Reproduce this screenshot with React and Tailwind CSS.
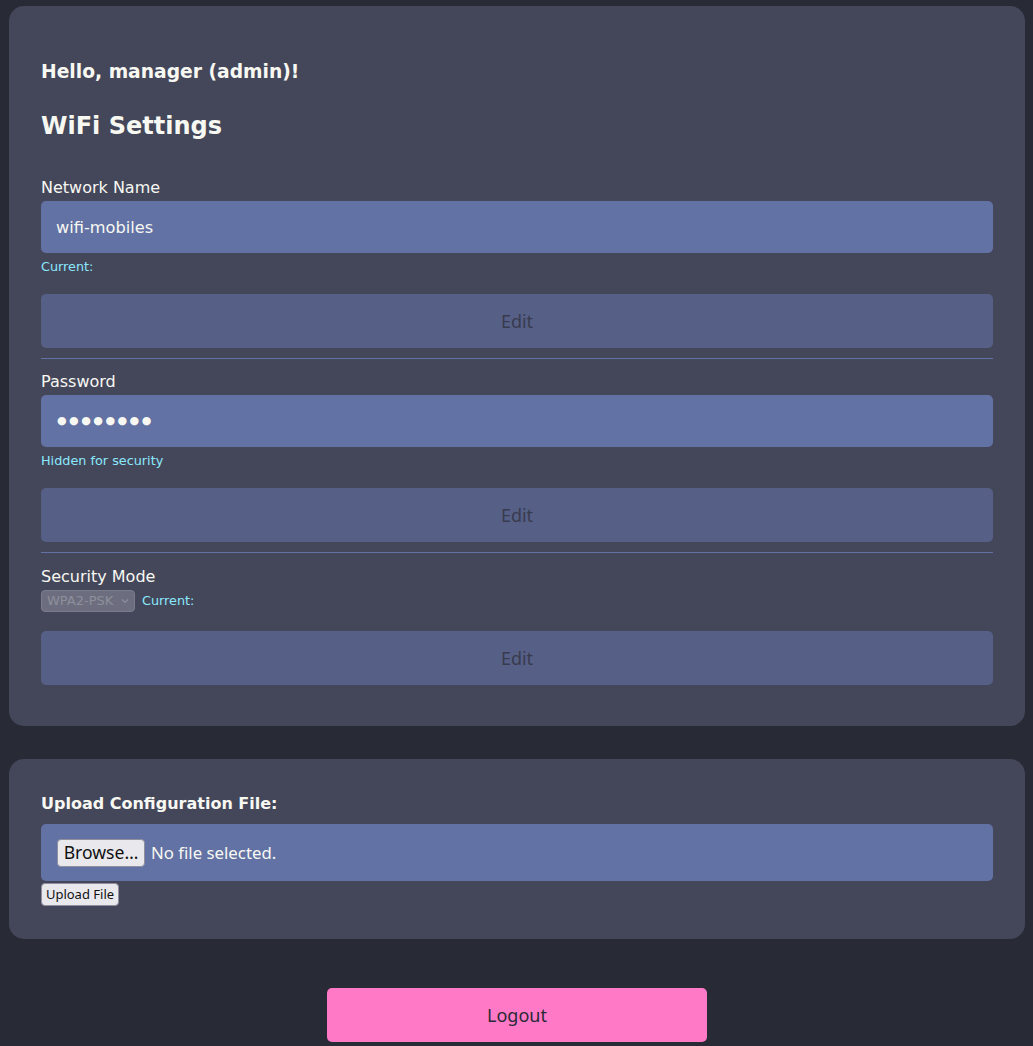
function Field({ label, value, note, password }) {
  return (
    <div>
      <div className="text-[16px] leading-[20px]">{label}</div>
      <div className="mt-[3px] h-[52px] rounded-[5px] bg-[#6272a4] px-[15px] flex items-center">
        {password ? (
          <span className="pl-[1px] text-[11px] tracking-[2.5px]">●●●●●●●●</span>
        ) : (
          <span className="pt-[3px] text-[16.2px]">{value}</span>
        )}
      </div>
      <div className="mt-[6px] text-[12.8px] leading-[16px] text-[#8be9fd]">{note}</div>
    </div>
  );
}

function EditButton({ className }) {
  return (
    <button
      disabled
      className={
        "w-full h-[54px] rounded-[5px] bg-[#566086] text-[#383b4f] text-[18px] font-['Noto_Sans',sans-serif] " +
        className
      }
    >
      Edit
    </button>
  );
}

export default function App() {
  return (
    <div className="min-h-screen bg-[#282a36] pt-[6px] pl-[9px] pr-[8px] pb-[4px] font-['DejaVu_Sans',sans-serif] text-[#f8f8f2]">
      <div className="rounded-[15px] bg-[#44475a] px-[32px] pt-[54px] pb-[41px]">
        <h3 className="text-[18.72px] leading-[24px] font-bold">Hello, manager (admin)!</h3>
        <h2 className="mt-[27px] text-[24px] leading-[30px] font-bold">WiFi Settings</h2>

        <div className="mt-[37px]">
          <Field label="Network Name" value="wifi-mobiles" note="Current:" />
        </div>
        <EditButton className="mt-[19px]" />
        <div className="mt-[10px] h-px bg-[#6272a4]" />

        <div className="mt-[13px]">
          <Field label="Password" note="Hidden for security" password />
        </div>
        <EditButton className="mt-[19px]" />
        <div className="mt-[10px] h-px bg-[#6272a4]" />

        <div className="mt-[14px] text-[16px] leading-[20px]">Security Mode</div>
        <div className="mt-[3px] flex items-center">
          <div className="w-[94px] h-[22px] rounded-[4px] border border-[#7a7c8c] bg-[#6c6e7f] pl-[5px] pr-[4px] flex items-center justify-between text-[13px] text-[#8e8f9c]">
            <span>WPA2-PSK</span>
            <svg width="10" height="10" viewBox="0 0 10 10" fill="none" stroke="#8e8f9c" strokeWidth="1.2">
              <path d="M2 3.5 L5 6.5 L8 3.5" />
            </svg>
          </div>
          <span className="ml-[7px] text-[12.8px] leading-[16px] text-[#8be9fd]">Current:</span>
        </div>
        <EditButton className="mt-[19px]" />
      </div>

      <div className="mt-[33px] rounded-[15px] bg-[#44475a] px-[32px] pt-[35px] pb-[33px]">
        <div className="text-[16px] leading-[20px] font-bold">Upload Configuration File:</div>
        <div className="mt-[10px] h-[57px] rounded-[5px] bg-[#6272a4] pl-[16px] flex items-center font-['Noto_Sans',sans-serif]">
          <span className="h-[28px] w-[88px] rounded-[4px] border border-[#8f8f9d] bg-[#e9e9ed] text-[#111] text-[17.6px] flex items-center justify-center">
            Browse…
          </span>
          <span className="ml-[6px] text-[16.8px]">No file selected.</span>
        </div>
        <button className="mt-[2px] h-[23px] w-[78px] rounded-[4px] border border-[#8f8f9d] bg-[#e9e9ed] text-[#111] text-[13px] font-['Noto_Sans',sans-serif]">
          Upload File
        </button>
      </div>

      <div className="mt-[49px] flex justify-center">
        <button className="w-[380px] h-[54px] rounded-[5px] bg-[#ff79c6] text-[#282a36] text-[18px] font-['Noto_Sans',sans-serif]">
          Logout
        </button>
      </div>
    </div>
  );
}
